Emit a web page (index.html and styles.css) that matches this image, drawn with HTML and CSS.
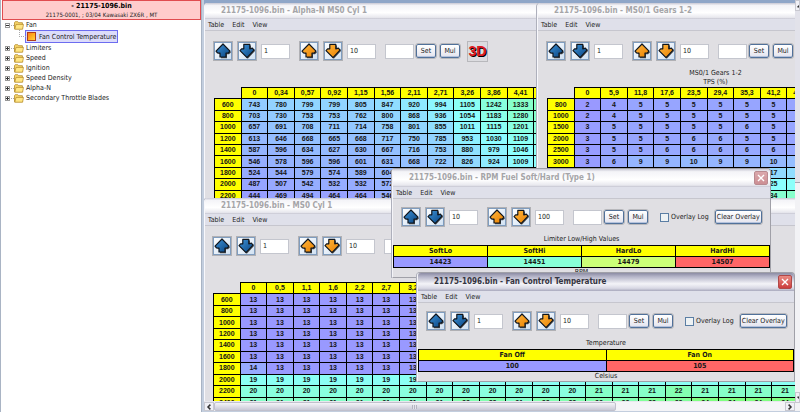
FILE: index.html
```html
<!DOCTYPE html>
<html lang="en">
<head>
<meta charset="utf-8">
<title>21175-1096.bin</title>
<link rel="stylesheet" href="styles.css">
</head>
<body>
<svg class="defs" aria-hidden="true">
  <defs>
    <linearGradient id="blue" x1="0" y1="0" x2="1" y2="1"><stop offset="0" stop-color="#3f94d8"/><stop offset="1" stop-color="#08427f"/></linearGradient>
    <linearGradient id="orange" x1="0" y1="0" x2="1" y2="1"><stop offset="0" stop-color="#ffb840"/><stop offset="1" stop-color="#ea8000"/></linearGradient>
    <linearGradient id="map" x1="0" y1="0" x2="1" y2="1"><stop offset="0" stop-color="#ff7a1c"/><stop offset=".5" stop-color="#ffae20"/><stop offset="1" stop-color="#ffd84a"/></linearGradient>
    <symbol id="up" viewBox="0 0 16 16"><path d="M8.8 2 16 9.4 14 11.2H12V15.2H6V11H3Z" fill="#1c1c1c" opacity=".75"/><path d="M8 1 15 8.2 13.4 10H11V14H5V10H2.6L1 8.2Z" stroke="#10161e" stroke-width="1.2" stroke-linejoin="round"/></symbol>
    <symbol id="down" viewBox="0 0 16 16"><path d="M6 2.4H12V6.4L15.2 6 16 8 8.8 15.8 2.4 9Z" fill="#1c1c1c" opacity=".75"/><path d="M4.8 1.4H10.8V5.8L13.4 5.2 15 7.2 8 14.6 1 7.6 2.6 5.8H4.8Z" stroke="#10161e" stroke-width="1.2" stroke-linejoin="round"/></symbol>
    <symbol id="folder" viewBox="0 0 10 9"><path d="M.5 7.8V1.6L1.2.7H3.8L4.7 1.7H8.4V7.8Z" fill="#f6d56a" stroke="#b48a28" stroke-width=".8"/><path d="M.8 8.2 2 3.4H9.5L8.6 8.2Z" fill="#ffe684" stroke="#b48a28" stroke-width=".7"/></symbol>
    <symbol id="chev" viewBox="0 0 8 8"><path d="M5.4 1.6 3 4 5.4 6.4" fill="none" stroke="#333" stroke-width="1.5"/></symbol>
  </defs>
</svg>

<nav class="sidebar">
  <header class="file">
    <strong>- 21175-1096.bin</strong>
    <span>21175-0001, ; 03/04 Kawasaki ZX6R , MT</span>
  </header>
  <ul class="tree">
    <li><i class="box open"></i><svg class="folder"><use href="#folder"/></svg>Fan</li>
    <li class="child"><a href="#fan" class="selected"><svg class="map" viewBox="0 0 9 9"><rect x=".5" y=".5" width="8" height="8" fill="url(#map)" stroke="#b03c1c"/></svg>Fan Control Temperature</a></li>
    <li><i class="box"></i><svg class="folder"><use href="#folder"/></svg>Limiters</li>
    <li><i class="box"></i><svg class="folder"><use href="#folder"/></svg>Speed</li>
    <li><i class="box"></i><svg class="folder"><use href="#folder"/></svg>Ignition</li>
    <li><i class="box"></i><svg class="folder"><use href="#folder"/></svg>Speed Density</li>
    <li><i class="box"></i><svg class="folder"><use href="#folder"/></svg>Alpha-N</li>
    <li><i class="box"></i><svg class="folder"><use href="#folder"/></svg>Secondary Throttle Blades</li>
  </ul>
</nav>

<main class="workspace">
  <div class="desktop">
    <section class="window alpha">
      <h2>21175-1096.bin - Alpha-N MS0 Cyl 1</h2>
      <div class="menu"><a href="#t">Table</a><a href="#e">Edit</a><a href="#v">View</a></div>
      <div class="toolbar">
        <button class="arrow blue" aria-label="Increase"><svg><use href="#up"/></svg></button>
        <button class="arrow blue" aria-label="Decrease"><svg><use href="#down"/></svg></button>
        <input type="text" value="1" aria-label="Fine step">
        <button class="arrow orange" aria-label="Increase"><svg><use href="#up"/></svg></button>
        <button class="arrow orange" aria-label="Decrease"><svg><use href="#down"/></svg></button>
        <input type="text" value="10" aria-label="Coarse step">
        <input class="value" type="text" aria-label="Value">
        <button class="text">Set</button><button class="text">Mul</button>
        <button class="three">3D</button>
      </div>
      <div class="caption"></div>
      <table class="grid" data-grid="alpha"></table>
    </section>

    <section class="window gears">
      <h2>21175-1096.bin - MS0/1 Gears 1-2</h2>
      <div class="menu"><a href="#t">Table</a><a href="#e">Edit</a><a href="#v">View</a></div>
      <div class="toolbar">
        <button class="arrow blue" aria-label="Increase"><svg><use href="#up"/></svg></button>
        <button class="arrow blue" aria-label="Decrease"><svg><use href="#down"/></svg></button>
        <input type="text" value="1" aria-label="Fine step">
        <button class="arrow orange" aria-label="Increase"><svg><use href="#up"/></svg></button>
        <button class="arrow orange" aria-label="Decrease"><svg><use href="#down"/></svg></button>
        <input type="text" value="10" aria-label="Coarse step">
        <input class="value" type="text" aria-label="Value">
        <button class="text">Set</button><button class="text">Mul</button>
      </div>
      <div class="caption"><span>MS0/1 Gears 1-2</span><span>TPS (%)</span></div>
      <table class="grid" data-grid="gears"></table>
    </section>

    <section class="window cyl">
      <h2>21175-1096.bin - MS0 Cyl 1</h2>
      <div class="menu"><a href="#t">Table</a><a href="#e">Edit</a><a href="#v">View</a></div>
      <div class="toolbar">
        <button class="arrow blue" aria-label="Increase"><svg><use href="#up"/></svg></button>
        <button class="arrow blue" aria-label="Decrease"><svg><use href="#down"/></svg></button>
        <input type="text" value="1" aria-label="Fine step">
        <button class="arrow orange" aria-label="Increase"><svg><use href="#up"/></svg></button>
        <button class="arrow orange" aria-label="Decrease"><svg><use href="#down"/></svg></button>
        <input type="text" value="10" aria-label="Coarse step">
        <input class="value" type="text" aria-label="Value">
      </div>
      <div class="caption"></div>
      <table class="grid" data-grid="cyl"></table>
    </section>

    <section class="window popup rpm">
      <h2>21175-1096.bin - RPM Fuel Soft/Hard (Type 1)<button class="close" aria-label="Close"><svg viewBox="0 0 8 8"><path d="M1 1 7 7M7 1 1 7" stroke="#fff" stroke-width="1.4"/></svg></button></h2>
      <div class="menu"><a href="#t">Table</a><a href="#e">Edit</a><a href="#v">View</a></div>
      <div class="toolbar">
        <button class="arrow blue" aria-label="Increase"><svg><use href="#up"/></svg></button>
        <button class="arrow blue" aria-label="Decrease"><svg><use href="#down"/></svg></button>
        <input type="text" value="10" aria-label="Fine step">
        <button class="arrow orange" aria-label="Increase"><svg><use href="#up"/></svg></button>
        <button class="arrow orange" aria-label="Decrease"><svg><use href="#down"/></svg></button>
        <input type="text" value="100" aria-label="Coarse step">
        <input class="value" type="text" aria-label="Value">
        <button class="text">Set</button><button class="text">Mul</button>
        <label><input type="checkbox">Overlay Log</label>
        <button class="text wide">Clear Overlay</button>
      </div>
      <div class="caption"><span>Limiter Low/High Values</span></div>
      <table class="strip">
        <tr><th>SoftLo</th><th>SoftHi</th><th>HardLo</th><th>HardHi</th></tr>
        <tr><td class="low">14423</td><td class="cool">14451</td><td class="warm">14479</td><td class="high">14507</td></tr>
      </table>
      <div class="unit">RPM</div>
    </section>

    <section class="window popup active fan" id="fan">
      <h2>21175-1096.bin - Fan Control Temperature<button class="close" aria-label="Close"><svg viewBox="0 0 8 8"><path d="M1 1 7 7M7 1 1 7" stroke="#fff" stroke-width="1.4"/></svg></button></h2>
      <div class="menu"><a href="#t">Table</a><a href="#e">Edit</a><a href="#v">View</a></div>
      <div class="toolbar">
        <button class="arrow blue" aria-label="Increase"><svg><use href="#up"/></svg></button>
        <button class="arrow blue" aria-label="Decrease"><svg><use href="#down"/></svg></button>
        <input type="text" value="1" aria-label="Fine step">
        <button class="arrow orange" aria-label="Increase"><svg><use href="#up"/></svg></button>
        <button class="arrow orange" aria-label="Decrease"><svg><use href="#down"/></svg></button>
        <input type="text" value="10" aria-label="Coarse step">
        <input class="value" type="text" aria-label="Value">
        <button class="text">Set</button><button class="text">Mul</button>
        <label><input type="checkbox">Overlay Log</label>
        <button class="text wide">Clear Overlay</button>
      </div>
      <div class="caption"><span>Temperature</span></div>
      <table class="strip">
        <tr><th>Fan Off</th><th>Fan On</th></tr>
        <tr><td class="low">100</td><td class="high">105</td></tr>
      </table>
      <div class="unit">Celsius</div>
    </section>
  </div>
  <div class="vbar"><button aria-label="Scroll up"><svg class="n"><use href="#chev"/></svg></button><i></i><button aria-label="Scroll down"><svg class="s"><use href="#chev"/></svg></button></div>
  <div class="hbar"><button aria-label="Scroll left"><svg><use href="#chev"/></svg></button><i></i><button aria-label="Scroll right"><svg class="e"><use href="#chev"/></svg></button></div>
</main>
<script src="tables.js"></script>
</body>
</html>
```
FILE: styles.css
```css
* { box-sizing: border-box; }
body {
  margin: 0;
  height: 100vh;
  display: flex;
  overflow: hidden;
  background: #c3cede;
  color: #222;
  font: 7px/10px "DejaVu Sans Condensed", "DejaVu Sans", sans-serif;
}
.defs { position: absolute; width: 0; height: 0; }
button, input { font: inherit; color: inherit; margin: 0; padding: 0; }
a { color: inherit; text-decoration: none; }
table { border-collapse: collapse; table-layout: fixed; }

.sidebar { flex: none; width: 202px; background: #fff; border-left: 1px solid #a9b4c4; border-right: 1px solid #a9b4c4; }
.file {
  display: flex;
  flex-direction: column;
  align-items: center;
  margin-left: 1px;
  height: 20px;
  border: 1px solid #e04c50;
  background: #ffcccc;
}
.file strong { line-height: 10px; color: #000; }
.file span { font-size: 6px; line-height: 8px; }
.tree { list-style: none; margin: 0; padding: 0 0 0 4px; }
.tree li { display: flex; align-items: center; gap: 2px; height: 10px; }
.tree .child { height: 13px; padding-left: 20px; position: relative; }
.tree .child::before { content: ""; position: absolute; left: 14px; top: 0; width: 6px; height: 6px; border: dotted #aaa; border-width: 0 0 1px 1px; }
.box { position: relative; width: 5px; height: 5px; margin-right: 2px; border: 1px solid #999; background: linear-gradient(#333, #333) center / 3px 1px no-repeat, linear-gradient(#333, #333) center / 1px 3px no-repeat; }
.box.open { background: linear-gradient(#333, #333) center / 3px 1px no-repeat; }
.box::after { content: ""; position: absolute; left: 5px; top: 1px; width: 3px; border-top: 1px dotted #aaa; }
.folder { width: 10px; height: 9px; }
.map { width: 9px; height: 9px; margin-right: 3px; }
.selected { display: flex; align-items: center; height: 13px; padding: 0 1px; border: 1px solid #6c6cf0; background: #dcdcfa; }

.workspace {
  flex: 1;
  min-width: 0;
  display: grid;
  grid-template: 1fr 10px 1px / 1fr 5px;
  padding-left: 2px;
}
.desktop { position: relative; overflow: hidden; background: #8fa6c8; }
.window { position: absolute; overflow: hidden; background: #e0dfe3; border-left: 1px solid #f8f8fc; box-shadow: -1px 0 #aeb0bc; border-radius: 4px 0 0 0; }
.alpha { left: 0; top: 3px; width: 335px; height: 200px; }
.gears { left: 333px; right: 0; top: 3px; height: 195px; }
.cyl { left: 0; right: 0; top: 198px; bottom: 0; }
.rpm { left: 188px; top: 168px; width: 379px; height: 110px; }
.fan { left: 213px; right: 0; top: 272px; height: 110px; }
h2 {
  display: flex;
  align-items: center;
  justify-content: space-between;
  height: 16px;
  margin: 0;
  padding: 0 2px 0 16px;
  background: linear-gradient(#c8c8d4, #f4f4f8 15%, #fff 60%, #e8e8ee 90%, #c4c4d0);
  color: #a5a5a8;
  font: bold 8px/16px "DejaVu Sans Condensed", "DejaVu Sans", sans-serif;
}
.menu { display: flex; gap: 8px; height: 12px; padding: 1px 3px; background: #dfe0ea; border-bottom: 1px solid #c6c6ce; }
.toolbar { display: flex; align-items: center; gap: 4px; height: 30px; padding: 10px 8px 0; }
.cyl .toolbar { padding-left: 7px; }
.arrow { flex: none; width: 20px; height: 20px; padding: 1px; border: 1px solid #b0b0b4; background: linear-gradient(135deg, #fff, #cfe0f2); box-shadow: inset 0 0 0 1px #7f9cbe; }
.arrow svg { display: block; width: 16px; height: 16px; }
.blue { fill: url(#blue); }
.orange { fill: url(#orange); }
.toolbar input[type="text"] { flex: none; width: 29px; height: 15px; padding: 0 2px; border: 1px solid #c4c6ce; background: #fff; }
input + .orange { margin-left: 5px; }
.toolbar .value { margin-left: 5px; }
.value + .text { margin-left: -2px; }
.text { flex: none; width: 20px; height: 14px; padding: 0; line-height: 10px; border: 1px solid #51719a; border-radius: 2px; outline: 1px solid #b8b8bc; background: linear-gradient(#fff, #e4e4ee); box-shadow: inset 0 -1px #b4c2dc; white-space: nowrap; }
.wide { width: 47px; }
.three { flex: none; width: 21px; height: 21px; margin-left: 3px; border: 1px solid #b8b8bc; background: #dcdce0; color: #dc1c24; font: bold 14px/18px "Liberation Sans", sans-serif; text-shadow: 1px 1px #000; display: flex; justify-content: center; }
label { display: flex; align-items: center; gap: 2px; margin: 0 2px 0 8px; white-space: nowrap; }
label input { appearance: none; width: 9px; height: 9px; border: 1px solid #5b7ea4; background: #eef2f4; }
.caption { display: flex; flex-direction: column; align-items: center; justify-content: flex-end; height: 26px; line-height: 9px; }
.gears .caption { padding-left: 98px; }

.grid { margin-left: 9px; font: bold 7px/10px "Liberation Sans", sans-serif; color: #141414; text-align: center; }
.grid th, .grid td { padding: 0; border: 1px solid #000; }
.grid th { background: #ff0; }
.grid th:empty { background: none; border-width: 0 1px 1px 0; }
.alpha .grid { width: 347px; height: 115px; }
.gears .grid { width: 267px; height: 115px; }
.cyl .grid { width: 586px; height: 127px; margin-left: 8px; }

.popup { border: 1px solid #a0a0a8; border-left-color: #f4f4f8; border-radius: 4px 4px 0 0; }
.popup h2 { height: 18px; line-height: 18px; }
.popup .toolbar { height: 28px; padding-top: 8px; }
.popup .caption { height: 18px; padding-bottom: 1px; }
.close { width: 14px; height: 14px; display: grid; place-items: center; border: 1px solid #b98a90; border-radius: 2px; background: linear-gradient(#dba8ac, #cd8f94); }
.close svg { width: 8px; height: 8px; }
.active h2 { color: #343440; background: linear-gradient(#8c8ca4, #b4b4c8 20%, #f4f4f8 60%, #d8d8e4 85%, #a8a8bc); }
.active .close { border-color: #b04848; background: linear-gradient(#ea8c84, #cc3c3c); }
.strip { width: 100%; height: 23px; font: bold 7px/10px "DejaVu Sans Condensed", "DejaVu Sans", sans-serif; text-align: center; }
.strip th, .strip td { padding: 0; border: 1px solid #000; color: #181818; }
.strip th { background: #ff0; }
.low { background: #99f; }
.cool { background: #88ffd7; }
.warm { background: #ccff77; }
.high { background: #f66; }
.unit { text-align: center; line-height: 9px; }

.vbar { grid-row: span 2; display: flex; flex-direction: column; background: #f2f2f5; }
.vbar button { height: 11px; }
.vbar i { height: 172px; border-bottom: 1px solid #a8a8b4; background: #e2e2ea; }
.vbar button:last-child { margin: auto 0 8px; }
.vbar button, .hbar button { border: 1px solid #c8c8d0; background: #f0f0f6; overflow: hidden; }
.vbar svg, .hbar svg { display: block; width: 8px; height: 8px; }
.n { transform: rotate(90deg); }
.s { transform: rotate(-90deg); }
.e { transform: rotate(180deg); }
.hbar { display: flex; background: #f4f4f7; border-top: 1px solid #e8e8ee; }
.hbar button { width: 10px; }
.hbar i { width: 68%; border: 1px solid #c0c0cc; border-radius: 2px; background: repeating-linear-gradient(90deg, #b4b4c0 0 1px, #e4e4ec 1px 2px) center / 5px 4px no-repeat, linear-gradient(#f4f4f8, #c8c8d6); }
.hbar button:last-child { margin-left: auto; }
```
FILE: tables.js
```js
const row = (head, values) => [head, ...values.split(" ")];
const grids = {
  alpha: {
    low: 398, span: 2600,
    head: "0 0,34 0,57 0,92 1,15 1,56 2,11 2,71 3,26 3,86 4,41 5,0",
    rows: [
      row(600, "743 780 799 799 805 847 920 994 1105 1242 1333 1380"),
      row(800, "703 730 753 753 762 800 868 936 1054 1183 1280 1330"),
      row(1000, "657 691 708 711 714 758 801 855 1011 1115 1201 1260"),
      row(1200, "613 646 668 665 668 717 750 785 953 1030 1109 1180"),
      row(1400, "587 596 634 627 630 667 716 753 880 979 1046 1110"),
      row(1600, "546 578 596 596 601 631 668 722 826 924 1009 1060"),
      row(1800, "524 544 579 574 589 604 640 690 780 880 960 1010"),
      row(2000, "487 507 542 532 532 572 610 660 740 840 920 980"),
      row(2200, "444 469 494 464 464 546 580 630 700 800 880 940")
    ]
  },
  gears: {
    low: 2, span: 92,
    head: "0 5,9 11,8 17,6 23,5 29,4 35,3 41,2 47,1",
    rows: [
      row(800, "2 4 5 5 5 5 5 5 5"),
      row(1000, "2 4 5 5 5 5 5 5 5"),
      row(1500, "3 5 5 5 5 5 6 5 5"),
      row(2000, "3 5 5 5 6 6 5 5 5"),
      row(2500, "3 5 5 6 6 6 6 6 6"),
      row(3000, "3 6 9 9 10 9 9 10 11"),
      row(3500, "4 9 12 14 15 16 17 17 18"),
      row(4000, "6 12 16 19 21 23 24 25 26"),
      row(4500, "8 16 22 26 29 31 33 34 35")
    ]
  },
  cyl: {
    low: 13, span: 22,
    head: "0 0,5 1,1 1,6 2,2 2,7 3,2 3,8 4,3 4,9 5,4 6 6,5 7,1 7,6 8,1 8,7 9,2 9,8 10,3 10,9",
    rows: [600, 800, 1000, 1200, 1400, 1600].map(rpm => [rpm, ...Array(21).fill("13")]).concat([
      [1800, "14", ...Array(20).fill("13")],
      [2000, ...Array(21).fill("19")],
      row(2200, "20 20 20 20 20 20 20 20 20 20 20 20 20 21 21 21 22 21 21 21 21"),
      row(2400, "21 21 21 21 21 21 21 21 22 22 21 22 22 22 22 23 23 24 24 24 24")
    ])
  }
};

// Cool-to-hot scale: blue at the low end, red at the high end.
function shade(t) {
  const hue = 240 * (1 - t), sat = 0.4 + 0.2 * t;
  const light = 1 - sat / 2;
  return `hsl(${hue} 100% ${light * 100}%)`;
}

document.querySelectorAll("[data-grid]").forEach(table => {
  const { low, span, head, rows } = grids[table.dataset.grid];
  const top = table.insertRow();
  ["", ...head.split(" ")].forEach(text => {
    const th = document.createElement("th");
    th.textContent = text;
    top.append(th);
  });
  rows.forEach(([rpm, ...values]) => {
    const tr = table.insertRow();
    const th = document.createElement("th");
    th.textContent = rpm;
    tr.append(th);
    values.forEach(value => {
      const td = tr.insertCell();
      td.textContent = value;
      td.style.backgroundColor = shade((value - low) / span);
    });
  });
});
```
